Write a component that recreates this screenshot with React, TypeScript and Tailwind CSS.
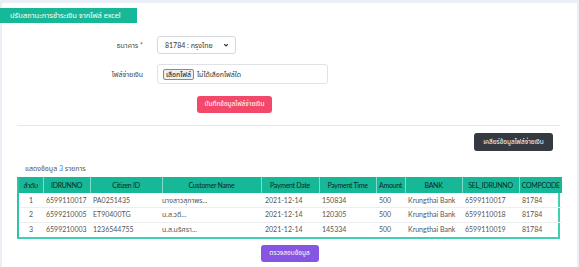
const rows = [
  { no: 1, id: '6599110017', citizen: 'PA0251435', name: 'นางสาวสุภาพร...', date: '2021-12-14', time: '150834', amount: '500', bank: 'Krungthai Bank', sel: '6599110017', comp: '81784' },
  { no: 2, id: '6599210005', citizen: 'ET90400TG', name: 'น.ส.วดี...', date: '2021-12-14', time: '120305', amount: '500', bank: 'Krungthai Bank', sel: '6599110018', comp: '81784' },
  { no: 3, id: '6599210003', citizen: '1236544755', name: 'น.ส.นริศรา...', date: '2021-12-14', time: '145334', amount: '500', bank: 'Krungthai Bank', sel: '6599110019', comp: '81784' },
]

const headers = [
  { label: 'ลำดับ', w: 'w-[24px]' },
  { label: 'IDRUNNO', w: 'w-[47px]' },
  { label: 'Citizen ID', w: 'w-[72px]' },
  { label: 'Customer Name', w: 'w-[99px]' },
  { label: 'Payment Date', w: 'w-[58px]' },
  { label: 'Payment Time', w: 'w-[57px]' },
  { label: 'Amount', w: 'w-[29px]' },
  { label: 'BANK', w: 'w-[57px]' },
  { label: 'SEL_IDRUNNO', w: 'w-[57px]' },
  { label: 'COMPCODE', w: 'w-[43px]' },
]

export default function App() {
  return (
    <div
      className="w-[579px] h-[267px] overflow-hidden bg-[#e9eff4] pt-[3px] pl-[2px] pr-[2px] text-[7px] leading-none"
      style={{ fontFamily: 'Lato, "Noto Sans", "Noto Sans Thai", sans-serif' }}
    >
      <div className="bg-white h-[264px] flex flex-col">
        {/* title tab */}
        <div className="-ml-[2px] mt-[5px] w-[137px] h-[15px] bg-[#17b898] text-white text-[7.5px] flex items-center pl-[10px]">
          ปรับสถานะการชำระเงิน จากไฟล์ excel
        </div>

        {/* bank select */}
        <div className="mt-[13px] flex items-center h-[18px]">
          <div className="w-[143px] text-right text-[#444] pr-[2px]">
            ธนาคาร <span className="text-[#e3342f]">*</span>
          </div>
          <div className="ml-[12px] w-[79px] h-[18px] border border-[#d5d9de] rounded-[3px] flex items-center justify-between pl-[7px] pr-[6px] text-[#333]">
            <span>81784 : กรุงไทย</span>
            <svg className="w-[6px] h-[6px]" viewBox="0 0 10 10" fill="none" stroke="#333" strokeWidth={2}>
              <path d="M2 3.5l3 3 3-3" />
            </svg>
          </div>
        </div>

        {/* file input */}
        <div className="mt-[10px] flex items-center h-[20px]">
          <div className="w-[143px] text-right text-[#444] pr-[2px]">ไฟล์จ่ายเงิน</div>
          <div className="ml-[12px] w-[171px] h-[20px] border border-[#dfe3e7] rounded-[3px] flex items-center pl-[5px] gap-[3px] text-[#333]">
            <span className="h-[11px] px-[2px] flex items-center bg-[#efefef] border border-[#8a8a8a] rounded-[2px] text-[#111]">
              เลือกไฟล์
            </span>
            <span>ไม่ได้เลือกไฟล์ใด</span>
          </div>
        </div>

        {/* save button */}
        <div className="mt-[12px] pl-[195px]">
          <button className="w-[75px] h-[17px] bg-[#f4486b] rounded-[3px] text-white text-[6.5px] flex items-center justify-center">
            บันทึกข้อมูลไฟล์จ่ายเงิน
          </button>
        </div>

        {/* divider */}
        <div className="mt-[12px] ml-[15px] mr-[17px] h-px bg-[#e6e9ec]" />

        <div className="mt-[7px] flex justify-end pr-[24px]">
          <button className="w-[79px] h-[18px] bg-[#343a40] rounded-[3px] text-white text-[6.5px] flex items-center justify-center">
            เคลียร์ข้อมูลไฟล์จ่ายเงิน
          </button>
        </div>

        <div className="mt-[12px] ml-[23px] h-[10px] flex items-center text-[#555]">
          แสดงข้อมูล&nbsp;<span className="text-[#3b82f6]">3</span>&nbsp;รายการ
        </div>

        {/* table */}
        <div className="mt-[4px] ml-[15px] w-[543px] border-2 border-[#3fd0b4] border-t-0 border-l-[#2cc4a6]">
          <table className="w-full table-fixed border-collapse">
            <colgroup>
              {headers.map((h) => (
                <col key={h.label} className={h.w} />
              ))}
            </colgroup>
            <thead>
              <tr className="h-[16px] bg-[#17b898]">
                {headers.map((h, i) => (
                  <th
                    key={h.label}
                    className={`font-normal text-[7px] tracking-[-0.3px] text-[#0d2924] text-center whitespace-nowrap overflow-hidden px-0 ${i > 0 ? 'border-l border-[#7fdcca]' : ''}`}
                  >
                    {h.label}
                  </th>
                ))}
              </tr>
            </thead>
            <tbody className="text-[#555]">
              {rows.map((r, i) => (
                <tr key={r.no} className={`h-[14.5px] ${i > 0 ? 'border-t border-[#eceeef]' : ''}`}>
                  <td className="text-center">{r.no}</td>
                  <td className="pl-[3px]">{r.id}</td>
                  <td className="pl-[3px]">{r.citizen}</td>
                  <td className="pl-[0px]">{r.name}</td>
                  <td className="pl-[4px]">{r.date}</td>
                  <td className="pl-[3px]">{r.time}</td>
                  <td className="pl-[3px]">{r.amount}</td>
                  <td className="pl-[3px]">{r.bank}</td>
                  <td className="pl-[3px]">{r.sel}</td>
                  <td className="pl-[3px]">{r.comp}</td>
                </tr>
              ))}
            </tbody>
          </table>
        </div>

        <div className="mt-[6px] flex justify-center">
          <button className="w-[58px] h-[17px] bg-[#8655e2] rounded-[3px] text-white text-[6.5px] flex items-center justify-center">
            ตรวจสอบข้อมูล
          </button>
        </div>
      </div>
    </div>
  )
}
